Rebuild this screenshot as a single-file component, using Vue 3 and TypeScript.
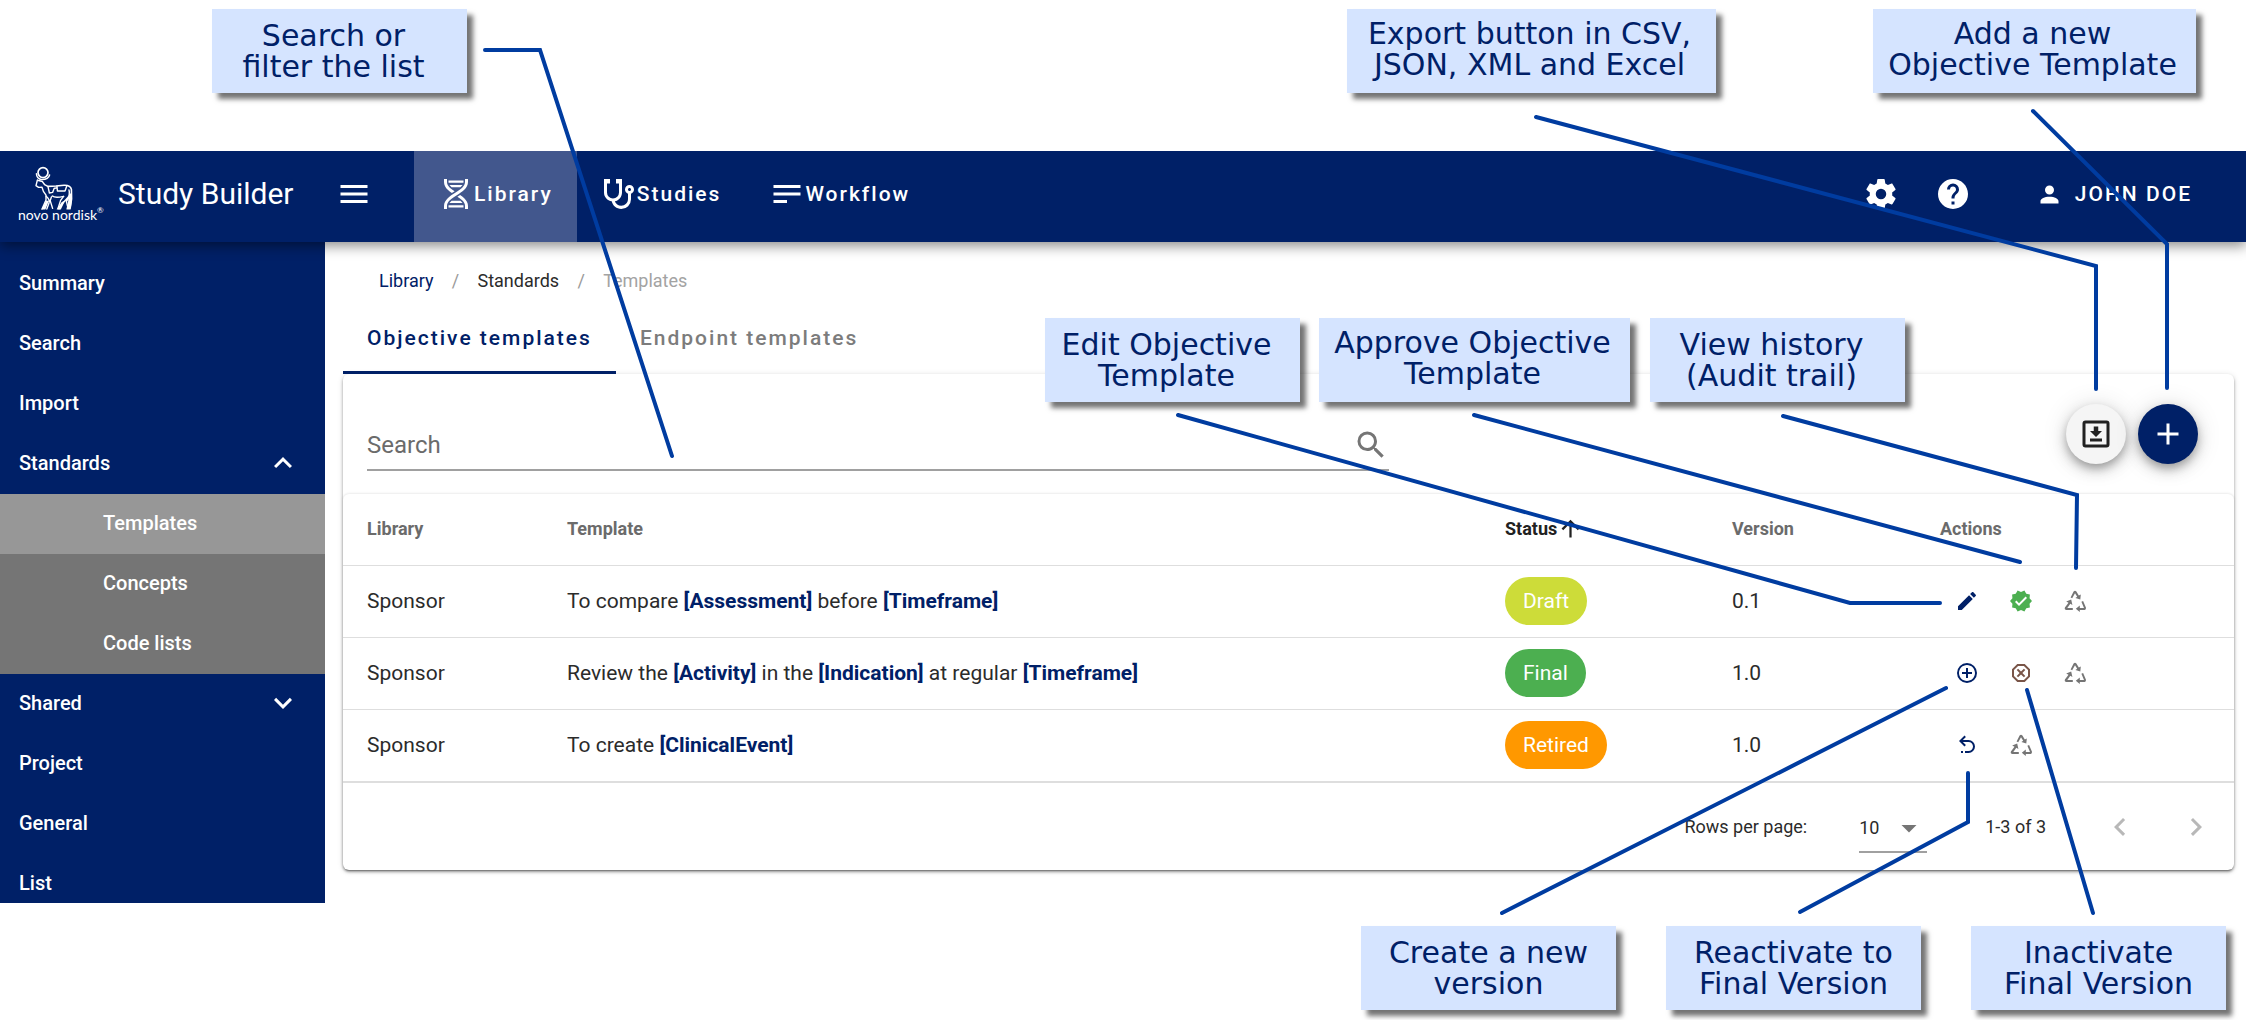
<script setup lang="ts">
import { ref } from 'vue'

interface NavItem { label: string; icon: string; active?: boolean }
interface SideItem { label: string; chevron?: 'up' | 'down'; children?: { label: string; active?: boolean }[] }
interface Part { text: string; param?: boolean }
interface Action { icon: string; tone: string; label: string }
interface Row { library: string; template: Part[]; status: string; version: string; actions: Action[] }
interface Callout { lines: string[]; x: number; y: number; w: number; variant?: string }

const icons: Record<string, string> = {
  menu: 'M3,6H21V8H3V6M3,11H21V13H3V11M3,16H21V18H3V16Z',
  dna: 'M4,2H6V4C6,5.44 6.68,6.61 7.88,7.78C8.74,8.61 9.89,9.41 11.09,10.2L9.26,11.39C8.27,10.72 7.31,10 6.5,9.21C5.07,7.82 4,6.1 4,4V2M18,2H20V4C20,6.1 18.93,7.82 17.5,9.21C16.09,10.58 14.29,11.73 12.54,12.84C10.79,13.96 9.09,15.05 7.88,16.22C6.68,17.39 6,18.56 6,20V22H4V20C4,17.9 5.07,16.18 6.5,14.79C7.91,13.42 9.71,12.27 11.46,11.16C13.21,10.04 14.91,8.95 16.12,7.78C17.32,6.61 18,5.44 18,4V2M14.74,12.61C15.73,13.28 16.69,14 17.5,14.79C18.93,16.18 20,17.9 20,20V22H18V20C18,18.56 17.32,17.39 16.12,16.22C15.26,15.39 14.11,14.59 12.91,13.8L14.74,12.61M7,3H17V4L16.94,4.5H7.06L7,4V3M7.68,6H16.32C16.08,6.34 15.8,6.69 15.42,7.06L14.91,7.5H9.07L8.58,7.06C8.2,6.69 7.92,6.34 7.68,6M9.09,16.5H14.93L15.42,16.94C15.8,17.31 16.08,17.66 16.32,18H7.68C7.92,17.66 8.2,17.31 8.58,16.94L9.09,16.5M7.06,19.5H16.94L17,20V21H7V20L7.06,19.5Z',
  stethoscope: 'M19,8C19.56,8 20,8.43 20,9A1,1 0 0,1 19,10C18.43,10 18,9.55 18,9C18,8.43 18.43,8 19,8M2,2V11C2,13.96 4.19,16.5 7.14,16.91C7.76,19.92 10.42,22 13.5,22A6.5,6.5 0 0,0 20,15.5V11.81C21.16,11.39 22,10.29 22,9A3,3 0 0,0 19,6A3,3 0 0,0 16,9C16,10.29 16.84,11.4 18,11.81V15.41C18,17.91 16,19.91 13.5,19.91C11.5,19.91 9.82,18.7 9.22,16.9C12,16.3 14,13.8 14,11V2H10V5H12V11A4,4 0 0,1 8,15A4,4 0 0,1 4,11V5H6V2H2Z',
  text: 'M21,6V8H3V6H21M3,18H12V16H3V18M3,13H21V11H3V13Z',
  cog: 'M12,15.5A3.5,3.5 0 0,1 8.5,12A3.5,3.5 0 0,1 12,8.5A3.5,3.5 0 0,1 15.5,12A3.5,3.5 0 0,1 12,15.5M19.43,12.97C19.47,12.65 19.5,12.33 19.5,12C19.5,11.67 19.47,11.34 19.43,11L21.54,9.37C21.73,9.22 21.78,8.95 21.66,8.73L19.66,5.27C19.54,5.05 19.27,4.96 19.05,5.05L16.56,6.05C16.04,5.66 15.5,5.32 14.87,5.07L14.5,2.42C14.46,2.18 14.25,2 14,2H10C9.75,2 9.54,2.18 9.5,2.42L9.13,5.07C8.5,5.32 7.96,5.66 7.44,6.05L4.95,5.05C4.73,4.96 4.46,5.05 4.34,5.27L2.34,8.73C2.21,8.95 2.27,9.22 2.46,9.37L4.57,11C4.53,11.34 4.5,11.67 4.5,12C4.5,12.33 4.53,12.65 4.57,12.97L2.46,14.63C2.27,14.78 2.21,15.05 2.34,15.27L4.34,18.73C4.46,18.95 4.73,19.03 4.95,18.95L7.44,17.94C7.96,18.34 8.5,18.68 9.13,18.93L9.5,21.58C9.54,21.82 9.75,22 10,22H14C14.25,22 14.46,21.82 14.5,21.58L14.87,18.93C15.5,18.67 16.04,18.34 16.56,17.94L19.05,18.95C19.27,19.03 19.54,18.95 19.66,18.73L21.66,15.27C21.78,15.05 21.73,14.78 21.54,14.63L19.43,12.97Z',
  help: 'M15.07,11.25L14.17,12.17C13.45,12.89 13,13.5 13,15H11V14.5C11,13.39 11.45,12.39 12.17,11.67L13.41,10.41C13.78,10.05 14,9.55 14,9C14,7.89 13.1,7 12,7A2,2 0 0,0 10,9H8A4,4 0 0,1 12,5A4,4 0 0,1 16,9C16,9.88 15.64,10.67 15.07,11.25M13,19H11V17H13M12,2A10,10 0 0,0 2,12A10,10 0 0,0 12,22A10,10 0 0,0 22,12C22,6.47 17.5,2 12,2Z',
  account: 'M12,4A4,4 0 0,1 16,8A4,4 0 0,1 12,12A4,4 0 0,1 8,8A4,4 0 0,1 12,4M12,14C16.42,14 20,15.79 20,18V20H4V18C4,15.79 7.58,14 12,14Z',
  up: 'M7.41,15.41L12,10.83L16.59,15.41L18,14L12,8L6,14L7.41,15.41Z',
  down: 'M7.41,8.58L12,13.17L16.59,8.58L18,10L12,16L6,10L7.41,8.58Z',
  left: 'M15.41,16.58L10.83,12L15.41,7.41L14,6L8,12L14,18L15.41,16.58Z',
  right: 'M8.59,16.58L13.17,12L8.59,7.41L10,6L16,12L10,18L8.59,16.58Z',
  caret: 'M7,10L12,15L17,10H7Z',
  magnify: 'M9.5,3A6.5,6.5 0 0,1 16,9.5C16,11.11 15.41,12.59 14.44,13.73L14.71,14H15.5L20.5,19L19,20.5L14,15.5V14.71L13.73,14.44C12.59,15.41 11.11,16 9.5,16A6.5,6.5 0 0,1 3,9.5A6.5,6.5 0 0,1 9.5,3M9.5,5C7,5 5,7 5,9.5C5,12 7,14 9.5,14C12,14 14,12 14,9.5C14,7 12,5 9.5,5Z',
  download: 'M5,3H19A2,2 0 0,1 21,5V19A2,2 0 0,1 19,21H5A2,2 0 0,1 3,19V5A2,2 0 0,1 5,3M5,5V19H19V5H5M8,17V15H16V17H8M12,14L8,10H10.5V7H13.5V10H16L12,14Z',
  plus: 'M19,13H13V19H11V13H5V11H11V5H13V11H19V13Z',
  sort: 'M13,20H11V8L5.5,13.5L4.08,12.08L12,4.16L19.92,12.08L18.5,13.5L13,8V20Z',
  pencil: 'M20.71,7.04C21.1,6.65 21.1,6 20.71,5.63L18.37,3.29C18,2.9 17.35,2.9 16.96,3.29L15.12,5.12L18.87,8.87M3,17.25V21H6.75L17.81,9.93L14.06,6.18L3,17.25Z',
  approve: 'M23,12L20.56,9.22L20.9,5.54L17.29,4.72L15.4,1.54L12,3L8.6,1.54L6.71,4.72L3.1,5.53L3.44,9.21L1,12L3.44,14.78L3.1,18.47L6.71,19.29L8.6,22.47L12,21L15.4,22.46L17.29,19.28L20.9,18.46L20.56,14.78L23,12M10,17L6,13L7.41,11.59L10,14.17L16.59,7.58L18,9L10,17Z',
  newVersion: 'M12,20C7.59,20 4,16.41 4,12C4,7.59 7.59,4 12,4C16.41,4 20,7.59 20,12C20,16.41 16.41,20 12,20M12,2A10,10 0 0,0 2,12A10,10 0 0,0 12,22A10,10 0 0,0 22,12A10,10 0 0,0 12,2M13,7H11V11H7V13H11V17H13V13H17V11H13V7Z',
  inactivate: 'M8.27,3L3,8.27V15.73L8.27,21H15.73L21,15.73V8.27L15.73,3M9.1,5H14.9L19,9.1V14.9L14.9,19H9.1L5,14.9V9.1M9.12,7.71L7.71,9.12L10.59,12L7.71,14.88L9.12,16.29L12,13.41L14.88,16.29L16.29,14.88L13.41,12L16.29,9.12L14.88,7.71L12,10.59',
  reactivate: 'M13.5,7A6.5,6.5 0 0,1 20,13.5A6.5,6.5 0 0,1 13.5,20H10V18H13.5C16,18 18,16 18,13.5C18,11 16,9 13.5,9H7.83L10.91,12.09L9.5,13.5L4,8L9.5,2.5L10.92,3.91L7.83,7H13.5M6,18H8V20H6V18Z',
  history: 'M7.6,8.4L10.6,2.6Q12,1 13.4,2.6L15.8,6.6L17.8,5.4L17.3,10.6L12.4,9L14.2,7.8L12,4.2L9.2,9.3ZM8.2,10.6L9.4,15.9L7.3,14.7L4.3,19.1H9.8V21H2.9Q1,20.4 1.9,18.5L5.5,13.7L3.2,12.5ZM18.4,12.7L20.1,11.9L23,18.8Q23.2,20.6 21.7,20.9H16.8V23L12.8,19.8L16.8,16.6V19H21Z',
}

const nav: NavItem[] = [
  { label: 'Library', icon: 'dna', active: true },
  { label: 'Studies', icon: 'stethoscope' },
  { label: 'Workflow', icon: 'text' },
]

const side: SideItem[] = [
  { label: 'Summary' },
  { label: 'Search' },
  { label: 'Import' },
  {
    label: 'Standards',
    chevron: 'up',
    children: [{ label: 'Templates', active: true }, { label: 'Concepts' }, { label: 'Code lists' }],
  },
  { label: 'Shared', chevron: 'down' },
  { label: 'Project' },
  { label: 'General' },
  { label: 'List' },
]

const history: Action = { icon: 'history', tone: 'grey', label: 'View history' }

const rows: Row[] = [
  {
    library: 'Sponsor',
    template: [{ text: 'To compare ' }, { text: '[Assessment]', param: true }, { text: ' before ' }, { text: '[Timeframe]', param: true }],
    status: 'Draft',
    version: '0.1',
    actions: [{ icon: 'pencil', tone: 'navy', label: 'Edit' }, { icon: 'approve', tone: 'green', label: 'Approve' }, history],
  },
  {
    library: 'Sponsor',
    template: [
      { text: 'Review the ' }, { text: '[Activity]', param: true }, { text: ' in the ' },
      { text: '[Indication]', param: true }, { text: ' at regular ' }, { text: '[Timeframe]', param: true },
    ],
    status: 'Final',
    version: '1.0',
    actions: [{ icon: 'newVersion', tone: 'navy', label: 'New version' }, { icon: 'inactivate', tone: 'brown', label: 'Inactivate' }, history],
  },
  {
    library: 'Sponsor',
    template: [{ text: 'To create ' }, { text: '[ClinicalEvent]', param: true }],
    status: 'Retired',
    version: '1.0',
    actions: [{ icon: 'reactivate', tone: 'navy', label: 'Reactivate' }, history],
  },
]

const callouts: Callout[] = [
  { lines: ['Search or', 'filter the list'], x: 212, y: 9, w: 255, variant: 'short' },
  { lines: ['Export button in CSV,', 'JSON, XML and Excel'], x: 1347, y: 9, w: 369, variant: 'raised' },
  { lines: ['Add a new', 'Objective Template'], x: 1873, y: 9, w: 323, variant: 'raised' },
  { lines: ['Edit Objective', 'Template'], x: 1045, y: 318, w: 255, variant: 'short' },
  { lines: ['Approve Objective', 'Template'], x: 1319, y: 318, w: 311, variant: 'raised' },
  { lines: ['View history', '(Audit trail)'], x: 1650, y: 318, w: 255, variant: 'short' },
  { lines: ['Create a new', 'version'], x: 1361, y: 926, w: 255 },
  { lines: ['Reactivate to', 'Final Version'], x: 1666, y: 926, w: 255 },
  { lines: ['Inactivate', 'Final Version'], x: 1971, y: 926, w: 255 },
]

const connectors: string[] = [
  '485,50 540,50 672,456',
  '1536,117 2096,266 2096,389',
  '2033,111 2167,244 2167,388',
  '1178,415 1850,603 1940,603',
  '1474,415 2020,562',
  '1783,416 2077,495 2076,568',
  '1946,688 1502,913',
  '1968,773 1968,822 1800,912',
  '2027,690 2093,913',
]

const query = ref('')
const pageSize = ref('10')
const tab = ref(0)
const tabs = ['Objective templates', 'Endpoint templates']
</script>

<template>
  <div class="sheet">
    <div class="app">
      <header class="bar">
        <a class="logo" href="#" aria-label="novo nordisk">
          <svg class="ox" viewBox="0 0 40 44" aria-hidden="true">
            <g fill="none" stroke="#fff" stroke-width="1.4" stroke-linecap="round" stroke-linejoin="round">
              <circle cx="9" cy="6.6" r="5" stroke-width="1.7" />
              <path d="M2.4 7.6Q2.6 13 8 13.6Q14.5 13.6 15.6 9" />
              <path d="M3.4 14L2 19.6L4.6 21.4L8 21.2L9.4 25.4L12 29.2V34L8 43" />
              <path d="M4.6 14.6L8.4 15.6L10.6 18.6L13.8 20.4L18 20.2L22 20L30 19.2Q36.6 19 37.4 23.4L37.6 33L36.2 42H33.4" stroke-width="1.6" />
              <path d="M14 20.6L15.4 27L18.6 26.4L20.2 22.2M23 20.4L23.4 25H31L32.6 20.4M20.4 22.4L23 21.8" />
              <path d="M12.2 30.2Q16 33.4 15 37L12.8 43M18.4 30Q21 32.4 29.6 30.4M17.4 31L16.2 34.6L18.6 42.4" />
              <path d="M35 24Q36.4 29 33 32.6L28.4 37.4L25 43M29.6 30.4L26.6 34.4L24 42.4M35.2 31.4L32.4 35.4L34 42" />
            </g>
            <path d="M12.4 34.6L14.8 35L11.4 43.4H7.4ZM27.8 36L31.2 34.4L26.8 43.4H22.6ZM35 28L38 27V34L36.6 43.4H32.4L33.8 38Z" fill="#fff" />
          </svg>
          <span class="word">novo nordisk<sup>®</sup></span>
        </a>
        <h1>Study Builder</h1>
        <button class="burger" type="button" aria-label="Menu">
          <svg class="i36" viewBox="0 0 24 24"><path :d="icons.menu" /></svg>
        </button>
        <nav class="nav" aria-label="Main">
          <a v-for="n in nav" :key="n.label" href="#" :class="{ active: n.active }">
            <svg class="i36" viewBox="0 0 24 24"><path :d="icons[n.icon]" /></svg>{{ n.label }}
          </a>
        </nav>
        <div class="tools">
          <button type="button" aria-label="Settings"><svg class="i36" viewBox="0 0 24 24"><path :d="icons.cog" /></svg></button>
          <button type="button" aria-label="Help"><svg class="i36" viewBox="0 0 24 24"><path :d="icons.help" /></svg></button>
          <button class="user" type="button"><svg class="i27" viewBox="0 0 24 24"><path :d="icons.account" /></svg>JOHN DOE</button>
        </div>
      </header>

      <div class="body">
        <nav class="side" aria-label="Library sections">
          <template v-for="s in side" :key="s.label">
            <a class="item" href="#">
              <span>{{ s.label }}</span>
              <svg v-if="s.chevron" class="i36" viewBox="0 0 24 24"><path :d="icons[s.chevron]" /></svg>
            </a>
            <div v-if="s.children" class="sub">
              <a v-for="c in s.children" :key="c.label" href="#" class="item" :class="{ active: c.active }">{{ c.label }}</a>
            </div>
          </template>
        </nav>

        <main class="main">
          <nav class="crumbs" aria-label="Breadcrumb">
            <a class="first" href="#">Library</a><i>/</i><a href="#">Standards</a><i>/</i><span>Templates</span>
          </nav>
          <div class="tabs" role="tablist">
            <button v-for="(t, i) in tabs" :key="t" type="button" role="tab" :aria-selected="tab === i" :class="{ active: tab === i }" @click="tab = i">{{ t }}</button>
          </div>

          <section class="card">
            <div class="toolbar">
              <label class="search">
                <input v-model="query" type="text" placeholder="Search" aria-label="Search" />
                <svg class="i36" viewBox="0 0 24 24"><path :d="icons.magnify" /></svg>
              </label>
              <div class="fabs">
                <button class="fab light" type="button" aria-label="Export"><svg class="i36" viewBox="0 0 24 24"><path :d="icons.download" /></svg></button>
                <button class="fab dark" type="button" aria-label="Add template"><svg class="i36" viewBox="0 0 24 24"><path :d="icons.plus" /></svg></button>
              </div>
            </div>

            <div class="list">
              <table>
                <colgroup><col class="c1" /><col /><col class="c3" /><col class="c4" /><col class="c5" /></colgroup>
                <thead>
                  <tr>
                    <th>Library</th>
                    <th>Template</th>
                    <th class="sorted"><span>Status<svg class="i27" viewBox="0 0 24 24"><path :d="icons.sort" /></svg></span></th>
                    <th>Version</th>
                    <th>Actions</th>
                  </tr>
                </thead>
                <tbody>
                  <tr v-for="(r, i) in rows" :key="i">
                    <td>{{ r.library }}</td>
                    <td><template v-for="(p, k) in r.template" :key="k"><b v-if="p.param">{{ p.text }}</b><template v-else>{{ p.text }}</template></template></td>
                    <td><span class="chip" :class="r.status.toLowerCase()">{{ r.status }}</span></td>
                    <td>{{ r.version }}</td>
                    <td>
                      <div class="acts">
                        <button v-for="a in r.actions" :key="a.icon" type="button" :class="a.tone" :aria-label="a.label">
                          <svg class="i24" viewBox="0 0 24 24"><path :d="icons[a.icon]" /></svg>
                        </button>
                      </div>
                    </td>
                  </tr>
                </tbody>
              </table>
              <footer class="pager">
                <label for="rpp">Rows per page:</label>
                <div class="select">
                  <select id="rpp" v-model="pageSize"><option>10</option><option>25</option></select>
                  <svg class="i36" viewBox="0 0 24 24"><path :d="icons.caret" /></svg>
                </div>
                <span class="range">1-3 of 3</span>
                <button type="button" aria-label="Previous page" disabled><svg class="i36" viewBox="0 0 24 24"><path :d="icons.left" /></svg></button>
                <button type="button" aria-label="Next page" disabled><svg class="i36" viewBox="0 0 24 24"><path :d="icons.right" /></svg></button>
              </footer>
            </div>
          </section>
        </main>
      </div>
    </div>

    <svg class="wires" aria-hidden="true">
      <polyline v-for="c in connectors" :key="c" :points="c" />
    </svg>
    <p
      v-for="c in callouts"
      :key="c.lines.join()"
      class="callout"
      :class="c.variant"
      :style="{ left: c.x + 'px', top: c.y + 'px', width: c.w + 'px' }"
    >
      <span v-for="l in c.lines" :key="l">{{ l }}</span>
    </p>
  </div>
</template>

<style>
body { margin: 0; background: #fff; }
</style>

<style scoped>
.sheet { position: relative; min-height: 100vh; font-family: Roboto, sans-serif; color: #2b2b2b; overflow: hidden; }
.sheet *, .sheet { box-sizing: border-box; }
.app { padding-top: 151px; }
a { color: inherit; text-decoration: none; }
button { font: inherit; color: inherit; background: none; border: 0; padding: 0; display: flex; align-items: center; justify-content: center; }
svg { fill: currentColor; display: block; flex: none; }
.i36 { width: 36px; height: 36px; }
.i27 { width: 27px; height: 27px; }
.i24 { width: 24px; height: 24px; }

.bar { position: relative; z-index: 1; height: 91px; margin-right: 6px; display: flex; align-items: center; background: #002067; color: #fff; box-shadow: 0 4px 12px rgba(0, 0, 0, .45); clip-path: inset(0 0 -20px 0); }
.bar > *, .nav a { padding-bottom: 5px; }
.logo { width: 100px; padding-left: 18px; display: flex; flex-direction: column; }
.ox { width: 40px; height: 44px; margin-left: 16px; }
.word { font: 14px/14px Lato, sans-serif; margin-top: -2px; white-space: nowrap; }
.word sup { font-size: 8px; line-height: 0; vertical-align: 7px; }
h1 { margin: 0; padding-left: 18px; width: 236px; font-size: 30px; font-weight: 400; line-height: 40px; white-space: nowrap; }
.burger { width: 36px; }
.bar > .nav { display: flex; align-self: stretch; margin-left: 42px; padding: 0; }
.nav a { display: flex; align-items: center; padding-left: 24px; padding-right: 24px; font-size: 21px; font-weight: 500; letter-spacing: 2px; }
.nav a.active { background: #42578d; }
.tools { margin-left: auto; margin-right: 54px; display: flex; align-items: center; }
.tools > button { width: 72px; }
.tools .user { width: auto; margin-left: 47px; gap: 12px; font-size: 21px; font-weight: 500; letter-spacing: 2px; }

.body { display: flex; align-items: flex-start; }
.side { width: 325px; height: 661px; flex: none; padding-top: 12px; overflow: hidden; background: #002067; color: #fff; font-size: 20px; font-weight: 500; }
.item { height: 60px; padding: 0 24px 2px 19px; display: flex; align-items: center; justify-content: space-between; }
.sub { background: #757575; }
.sub .item { padding-left: 103px; }
.sub .active { background: #979797; }

.main { flex: 1; min-width: 0; padding: 24px 18px 0; }
.crumbs { display: flex; height: 30px; padding: 0 0 2px 36px; align-items: center; font-size: 18px; }
.crumbs .first { color: #002067; }
.crumbs i { font-style: normal; width: 44px; text-align: center; color: #9a9a9a; }
.crumbs span { color: #a3a3a3; }
.tabs { display: flex; margin-top: 6px; }
.tabs button { height: 72px; padding: 3px 24px 0; font-size: 21px; font-weight: 500; letter-spacing: 2px; color: #7c7c7c; border-bottom: 3px solid transparent; }
.tabs .active { color: #002067; border-color: #002067; }

.card { border-radius: 6px; box-shadow: 0 3px 1px -2px rgba(0, 0, 0, .2), 0 2px 3px rgba(0, 0, 0, .35), 0 1px 6px rgba(0, 0, 0, .12); }
.toolbar { height: 120px; padding: 0 36px 0 24px; display: flex; justify-content: space-between; }
.search { flex: 0 1 1022px; height: 50px; margin-top: 47px; display: flex; align-items: center; border-bottom: 2px solid #a0a0a0; color: #757575; }
.search input { flex: 1; min-width: 0; border: 0; outline: 0; padding: 0; background: none; font: 24px/30px Roboto, sans-serif; color: #2b2b2b; }
.search input::placeholder { color: #6b6b6b; opacity: 1; }
.fabs { display: flex; gap: 12px; margin-top: 30px; }
.fab { width: 60px; height: 60px; border-radius: 50%; box-shadow: 0 5px 8px -1px rgba(0, 0, 0, .25), 0 6px 15px rgba(0, 0, 0, .16), 0 1px 27px rgba(0, 0, 0, .12); }
.light { background: #f5f5f5; color: #212121; }
.dark { background: #002067; color: #fff; }

.list { border-radius: 6px; box-shadow: 0 0 3px rgba(0, 0, 0, .16); }
table { width: 100%; table-layout: fixed; border-collapse: separate; border-spacing: 0; font-size: 21px; }
.c1 { width: 200px; } .c3 { width: 227px; } .c4 { width: 208px; } .c5 { width: 318px; }
th, td { height: 72px; padding: 0 24px 2px; text-align: left; border-bottom: 1px solid #dedede; white-space: nowrap; }
th { font-size: 18px; font-weight: 700; color: #6b6b6b; }
tbody tr:last-child td { height: 73px; border-bottom-width: 2px; }
.sorted { color: #212121; }
.sorted span { display: flex; align-items: center; }
td b { font-weight: 700; color: #002067; }
.chip { display: inline-flex; align-items: center; height: 48px; padding: 0 18px; border-radius: 24px; color: #fff; vertical-align: middle; }
.draft { background: #cddc39; }
.final { background: #4caf50; }
.retired { background: #ff9800; }
.acts { display: flex; }
.acts button { width: 54px; height: 54px; }
.navy { color: #002067; } .green { color: #4caf50; } .grey { color: #757575; } .brown { color: #795548; }

.pager { height: 87px; padding-right: 20px; display: flex; align-items: center; justify-content: flex-end; font-size: 18px; }
.select { width: 68px; height: 48px; margin: 4px 58px 0 52px; display: flex; align-items: center; position: relative; border-bottom: 2px solid #a0a0a0; color: #757575; }
.select select { appearance: none; width: 100%; border: 0; padding: 0; background: none; font: 18px/24px Roboto, sans-serif; color: #2b2b2b; }
.select svg { position: absolute; right: 0; pointer-events: none; }
.range { margin-right: 56px; }
.pager button { width: 36px; color: #b8b8b8; }
.pager button + button { margin-left: 40px; }

.wires { position: absolute; inset: 0; width: 100%; height: 100%; z-index: 2; pointer-events: none; }
.wires polyline { fill: none; stroke: #003ca0; stroke-width: 4; stroke-linecap: round; }
.callout { position: absolute; z-index: 3; height: 84px; margin: 0; display: flex; flex-direction: column; align-items: center; justify-content: center; background: #d5e4ff; color: #002067; font: 30px/31px "DejaVu Sans", sans-serif; white-space: nowrap; box-shadow: 6px 6px 5px rgba(0, 0, 0, .55); }
.callout.short { padding-right: 12px; }
.callout.raised { padding: 0 4px 5px 0; }
</style>
